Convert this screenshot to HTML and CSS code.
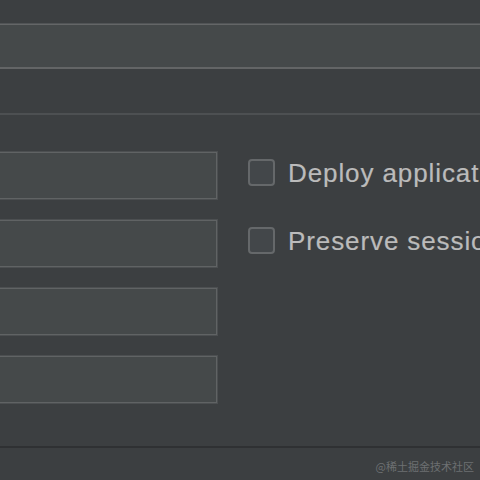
FILE: index.html
```html
<!DOCTYPE html>
<html>
<head>
<meta charset="utf-8">
<link rel="stylesheet" href="styles.css">
</head>
<body>
<div class="page">
  <div class="top-field"></div>
  <div class="separator"></div>
  <div class="form">
    <div class="input"></div>
    <label class="check"><span class="box"></span><span class="label">Deploy applications</span></label>
    <div class="input"></div>
    <label class="check"><span class="box"></span><span class="label">Preserve sessions</span></label>
    <div class="input"></div>
    <div></div>
    <div class="input"></div>
    <div></div>
  </div>
  <div class="bottom-line"></div>
  <div class="footer"><span class="watermark">@稀土掘金技术社区</span></div>
</div>
</body>
</html>
```
FILE: styles.css
```css
html, body {
  margin: 0;
  padding: 0;
  background: #3c3f41;
  overflow: hidden;
}
.page {
  width: 480px;
  height: 480px;
  overflow: hidden;
  font-family: "Liberation Sans", Arial, sans-serif;
}
.top-field {
  margin-top: 23px;
  height: 43px;
  background: #45494a;
  border-top: 1px solid #515456;
  border-bottom: 2px solid #636566;
  box-shadow: inset 0 1px 0 #646667;
}
.separator {
  margin-top: 44px;
  height: 2px;
  background: #4d5052;
}
.form {
  display: grid;
  grid-template-columns: 217px 1fr;
  grid-auto-rows: 47px;
  column-gap: 31px;
  row-gap: 21px;
  padding-top: 37px;
}
.input {
  margin-left: -4px;
  background: #45494a;
  border: 1px solid #606364;
  box-shadow: 0 0 0 1px #4c4f51;
  box-sizing: border-box;
}
.check {
  display: flex;
  align-items: center;
  gap: 13px;
  height: 40px;
  white-space: nowrap;
}
.box {
  flex: none;
  width: 27px;
  height: 27px;
  box-sizing: border-box;
  border: 2px solid #65686a;
  border-radius: 4px;
  background: #43474a;
}
.label {
  color: #bbbbbb;
  font-size: 26px;
  letter-spacing: 0.9px;
  padding-top: 2px;
  -webkit-text-stroke: 0.2px #bbbbbb;
}
.bottom-line {
  margin-top: 43px;
  height: 2px;
  background: #2f3133;
}
.footer {
  display: flex;
  justify-content: flex-end;
  padding: 10px 6px 0 0;
}
.watermark {
  color: #6d7072;
  font-size: 11px;
  font-family: "Noto Sans CJK SC", sans-serif;
}
```
